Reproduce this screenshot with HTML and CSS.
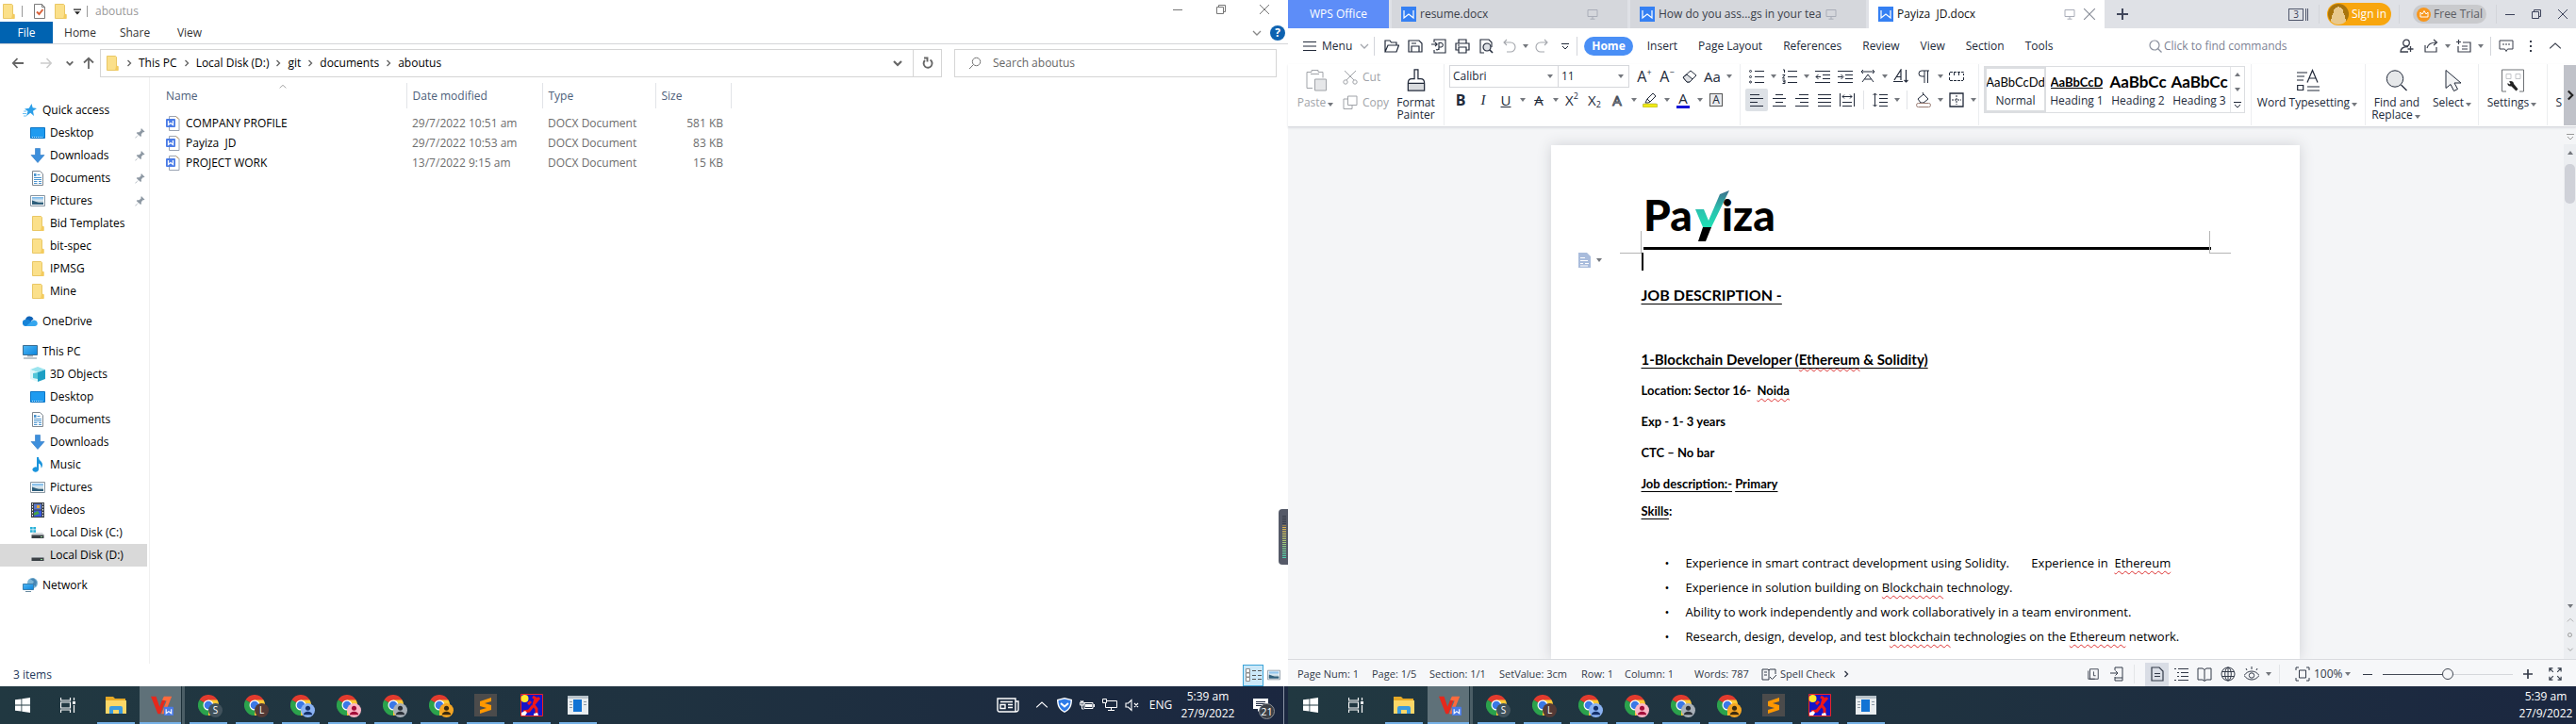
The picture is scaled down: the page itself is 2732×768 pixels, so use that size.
FILE: index.html
```html
<!DOCTYPE html>
<html lang="en">
<head>
<meta charset="utf-8">
<title>aboutus - Payiza JD.docx</title>
<link rel="stylesheet" href="styles.css">
</head>
<body>
<svg class="sprite" aria-hidden="true">
  <defs>
    <linearGradient id="gBlue" x1="0" y1="0" x2="1" y2="1"><stop offset="0" stop-color="#4fb8f5"/><stop offset="1" stop-color="#0a84dd"/></linearGradient>
    <linearGradient id="gCheck" x1="0" y1="1" x2="0" y2="0"><stop offset="0" stop-color="#1fe0b4"/><stop offset=".5" stop-color="#2bbfae"/><stop offset="1" stop-color="#3a6f8c"/></linearGradient>
    <linearGradient id="gPhoto" x1="0" y1="0" x2="0" y2="1"><stop offset="0" stop-color="#6fb4ea"/><stop offset=".5" stop-color="#e6eef2"/><stop offset="1" stop-color="#2f6076"/></linearGradient>
  </defs>
  <symbol id="folder" viewBox="0 0 16 16"><path fill="#fbe08a" stroke="#e9c765" d="M2.5.5h9l1 1v9.500l1.500.5v4H2.500z"/><path fill="#f3cb5e" d="M12 11h2.500v5H11z"/></symbol>
  <symbol id="checkdoc" viewBox="0 0 16 16"><path fill="#fff" stroke="#7b7b7b" d="M2.500.5h8l3 3v12h-11z"/><path fill="none" stroke="#7b7b7b" d="M10.500.5v3h3"/><path fill="none" stroke="#d9623b" stroke-width="2" d="M5 8.500l2.500 2.500 4-5"/></symbol>
  <symbol id="qdrop" viewBox="0 0 8 8"><path d="M0 1.500h8v1.300H0zM1 4.200h6L4 7.500z" fill="#222"/></symbol>
  <symbol id="minus" viewBox="0 0 12 12"><path d="M1 6.500h10" stroke="currentColor"/></symbol>
  <symbol id="restore" viewBox="0 0 12 12"><path d="M1.500 3.500h7v7h-7zM3.500 3.500v-2h7v7h-2" fill="none" stroke="currentColor"/></symbol>
  <symbol id="close" viewBox="0 0 12 12"><path d="M1 1l10 10M11 1L1 11" stroke="currentColor"/></symbol>
  <symbol id="down" viewBox="0 0 12 12"><path d="M2 4l4 4 4-4" fill="none" stroke="currentColor" stroke-width="1.300"/></symbol>
  <symbol id="downb" viewBox="0 0 12 12"><path d="M2 4l4 4 4-4" fill="none" stroke="currentColor" stroke-width="2.200"/></symbol>
  <symbol id="up" viewBox="0 0 12 12"><path d="M1 8l5-4.500L11 8" fill="none" stroke="currentColor"/></symbol>
  <symbol id="right" viewBox="0 0 8 8"><path d="M2.500 1l3 3-3 3" fill="none" stroke="currentColor" stroke-width="1.400"/></symbol>
  <symbol id="arrl" viewBox="0 0 14 14"><path d="M13 7H2M6.500 2L1.800 7l4.700 5" fill="none" stroke="currentColor" stroke-width="1.800"/></symbol>
  <symbol id="arrr" viewBox="0 0 14 14"><path d="M1 7h11M7.500 2l4.700 5-4.700 5" fill="none" stroke="currentColor" stroke-width="1.600"/></symbol>
  <symbol id="arru" viewBox="0 0 14 14"><path d="M7 13V2M2 6.500L7 1.800l5 4.700" fill="none" stroke="currentColor" stroke-width="1.800"/></symbol>
  <symbol id="refresh" viewBox="0 0 14 14"><path d="M9.500 3.500A4.500 4.500 0 1 1 4 4M3 1.500h3.500v4" fill="none" stroke="currentColor" stroke-width="1.900"/></symbol>
  <symbol id="mag" viewBox="0 0 14 14"><circle cx="8.500" cy="5.500" r="4.200" fill="none" stroke="currentColor"/><path d="M5.500 8.500L1 13" stroke="currentColor"/></symbol>
  <symbol id="magr" viewBox="0 0 14 14"><circle cx="6" cy="6" r="5" fill="none" stroke="currentColor" stroke-width="1.200"/><path d="M9.500 9.500L13.500 13.500" stroke="currentColor" stroke-width="1.200"/></symbol>
  <symbol id="star" viewBox="0 0 16 16"><path fill="#2c9fe8" d="M9.500 1l1.200 4.300 4.300.7-4 2.700L12 14 8.300 10.800 4 14l1.500-5L2 6.500l4.800-.8z"/><path stroke="#6cc0f2" d="M1 9h3M0 11.500h4M1 14h3"/></symbol>
  <symbol id="desk" viewBox="0 0 16 16"><path fill="#1e9bf0" stroke="#0b74c4" d="M.5 2.500h15v11H.5z"/><path stroke="#cfe9fb" stroke-dasharray="1 1" d="M2 12.500h12"/></symbol>
  <symbol id="dl" viewBox="0 0 16 16"><path fill="#3d8fdc" stroke="#2a77c4" stroke-width=".6" d="M5.500.5h5v7H15l-7 8-7-8h4.500z"/></symbol>
  <symbol id="doc" viewBox="0 0 16 16"><path fill="#fff" stroke="#7e8790" d="M2.500.5h8l3 3v12h-11z"/><path stroke="#4a94cf" d="M4 7.500h8M4 9.500h8M4 11.500h3.500M9 11.500h3M4 13.500h3.500M9 13.500h3M7.500 4.500h3"/><path fill="#4a94cf" d="M4 3h2.500v3H4z"/></symbol>
  <symbol id="pic" viewBox="0 0 16 16"><path fill="#fff" stroke="#8795a1" d="M.5 2.500h15v11H.5z"/><path fill="url(#gPhoto)" d="M2 4h12v8H2z"/><path fill="#2f5f7c" d="M2 7.500l7 2.500h5v2H2z"/></symbol>
  <symbol id="cloud" viewBox="0 0 16 16"><path fill="#0f63b8" d="M3 6a4.500 4.500 0 0 1 8.500-.8L7 10z"/><path fill="#1684d8" d="M3.500 13A3.500 3.500 0 0 1 3.200 6c2-.5 3.500.3 5 1.600L14 12z"/><path fill="#35a6ee" d="M3.500 13L10 7.500a3.500 3.500 0 0 1 3-.8 3.200 3.200 0 0 1 .2 6.300z"/></symbol>
  <symbol id="pc" viewBox="0 0 16 16"><path fill="url(#gBlue)" stroke="#3e6f92" d="M.5 1.500h15v10H.5z"/><path stroke="#7b8b97" d="M5 12.800h6M1 15h14"/></symbol>
  <symbol id="cube" viewBox="0 0 16 16"><path fill="#9be4ee" d="M8 0l8 3-8 3-8-3z"/><path fill="#dff7fa" d="M0 3l8 3v10l-8-3z"/><path fill="#1d9fc4" d="M16 3L8 6v10l8-3z"/><path fill="#52c6d8" d="M3 7l5-1v7l-5-1z"/></symbol>
  <symbol id="music" viewBox="0 0 16 16"><path fill="#1a94dc" d="M7 0h2c0 4 4 4 4 8 0 1.500-.6 3-1.500 3.500C12 8 10 7 9 6.500V13a3.300 2.700 0 1 1-2-2.400z"/></symbol>
  <symbol id="video" viewBox="0 0 16 16"><path fill="#3a3f46" d="M1 0h14v16H1z"/><path stroke="#fff" stroke-dasharray="1.500 1.500" d="M2.500 1v14M13.500 1v14"/><path fill="#5c79c9" d="M4 1.500h8v6H4z"/><path fill="#3758e0" d="M4 8.500h8V15H4z"/><path fill="#e0a63a" d="M7 3h3v3H7z"/><path fill="#46a04a" d="M4 11l4-2 2 3-6 2z"/></symbol>
  <symbol id="drive" viewBox="0 0 16 16"><path fill="#d7dadd" d="M3 8h10l2 3H1z"/><path fill="#3b4146" d="M1.500 10.500h13V14h-13z"/><path fill="#8fd08f" d="M11 12h2v1h-2z"/></symbol>
  <symbol id="drivec" viewBox="0 0 16 16"><use href="#drive"/><path fill="#27b0d8" d="M0 2h2.700v2.500H0zM3.300 2H6v2.500H3.300zM0 5.200h2.700v2.500H0zM3.300 5.200H6v2.500H3.300z"/></symbol>
  <symbol id="net" viewBox="0 0 16 16"><circle cx="10.500" cy="5.500" r="5.500" fill="#7eb6d6"/><path fill="#4786b4" d="M8 1l4 3-2 3 4 2 1-5-3-3.500z"/><path fill="url(#gBlue)" stroke="#3a7fae" d="M.5 6.500h11v6H.5z"/><path stroke="#6a8ba0" d="M3 14.500h6"/></symbol>
  <symbol id="pin" viewBox="0 0 12 12"><path fill="#8d98a3" d="M7.500 0l4 4-1 .6-.8-.2-2.300 2.300.2 2.300-1 .8L4.300 7.500 1 11.200.5 11.500.4 11l3.700-3.300L1.800 5.400l1-.9 2.300.2 2.200-2.300-.3-.9z"/></symbol>
  <symbol id="docw" viewBox="0 0 16 16"><path fill="#fff" stroke="#9aa3b2" d="M3.500.5h7.500l3 3v12H3.500z"/><path fill="none" stroke="#c9a26b" d="M10.500.5l3 3"/><rect y="3" width="10" height="9" rx="1" fill="#4a7be6"/><path fill="none" stroke="#fff" stroke-width="1.300" d="M2.500 5v4.500L5 7.500l2.500 2V5"/></symbol>
  <symbol id="details" viewBox="0 0 18 16"><path fill="#fff" stroke="#8b8b8b" d="M1.500 1.500h4v4h-4zM1.500 6h4v4h-4zM1.500 10.500h4v4h-4z"/><path stroke="#555" d="M8 3.500h4M14 3.500h4M8 8.500h4M14 8.500h4M8 12.500h4M14 12.500h4"/></symbol>

  <symbol id="wtab" viewBox="0 0 16 16"><path fill="#3580f3" d="M0 0h16v16H0z"/><path fill="none" stroke="#fff" stroke-width="1.200" d="M3 4v8l5-4 5 4V4"/></symbol>
  <symbol id="mon" viewBox="0 0 12 12"><path d="M1 1.500h10v7H1zM6 8.500v2.500M3.500 11.200h5" fill="none" stroke="currentColor"/></symbol>
  <symbol id="plus" viewBox="0 0 12 12"><path d="M6 0v12M0 6h12" stroke="currentColor" stroke-width="2"/></symbol>
  <symbol id="burger" viewBox="0 0 14 12"><path d="M0 1.500h14M0 6h14M0 10.500h14" stroke="currentColor"/></symbol>
  <symbol id="open" viewBox="0 0 16 16"><path d="M1 14V2h5l1.500 2H13v3M1 14l3-7h11.500L13 14z" fill="none" stroke="currentColor" stroke-width="1.200"/></symbol>
  <symbol id="save" viewBox="0 0 16 16"><path d="M1 2h11l3 3v9H1zM4 14V8h8v6M4 5h5" fill="none" stroke="currentColor" stroke-width="1.200"/></symbol>
  <symbol id="pdf" viewBox="0 0 16 16"><path d="M3 4V1h12v14H3v-3M0 6h6M4 3.800L6.200 6 4 8.200M8 12V4.500h2.500a2.300 2.300 0 0 1 0 4.500H8M5 11.500a2 2 0 0 0 3-1" fill="none" stroke="currentColor" stroke-width="1.100"/></symbol>
  <symbol id="print" viewBox="0 0 16 16"><path d="M4 5V1h8v4M4 12H1V5h14v7h-3M4 9h8v6H4zM3 7h2" fill="none" stroke="currentColor" stroke-width="1.200"/></symbol>
  <symbol id="preview" viewBox="0 0 16 16"><path d="M6 15H2V1h9l3 3v5" fill="none" stroke="currentColor" stroke-width="1.100"/><circle cx="9" cy="9" r="4" fill="#dde0e5" stroke="currentColor" stroke-width="1.200"/><path d="M12 12l3 3" stroke="currentColor" stroke-width="1.600"/></symbol>
  <symbol id="undo" viewBox="0 0 16 16"><path d="M5 1L2 4l3 3M2 4h7a4.500 4.500 0 0 1 0 10H5" fill="none" stroke="currentColor" stroke-width="1.100"/></symbol>
  <symbol id="redo" viewBox="0 0 16 16"><path d="M11 1l3 3-3 3M14 4H7a4.500 4.500 0 0 0 0 10h4" fill="none" stroke="currentColor" stroke-width="1.100"/></symbol>
  <symbol id="more" viewBox="0 0 8 8"><path d="M0 1.500h8M1 4l3 3 3-3" fill="none" stroke="currentColor"/></symbol>
  <symbol id="user" viewBox="0 0 16 16"><circle cx="8" cy="4.500" r="3.300" fill="none" stroke="currentColor" stroke-width="1.300"/><path d="M10 8.500c-4 0-8 1-8 5.500h8M12.500 8v6M9.500 11h6" fill="none" stroke="currentColor" stroke-width="1.300"/></symbol>
  <symbol id="share" viewBox="0 0 16 16"><path d="M2 7v7h12V9M4 10c1-4 4-6 10-6M11 1l3.500 3L11 7" fill="none" stroke="currentColor" stroke-width="1.200"/></symbol>
  <symbol id="cmt" viewBox="0 0 16 16"><path d="M7 4h8v10H2V8M0 3.500h5M2.500 1v5M6 8h6M6 11h6" fill="none" stroke="currentColor" stroke-width="1.200"/></symbol>
  <symbol id="chat" viewBox="0 0 16 16"><path d="M1 2h14v9H9.500L8 13.500 6.500 11H1z" fill="none" stroke="currentColor"/><path d="M4 6h2M7 6h2M10 6h2" stroke="currentColor"/></symbol>
  <symbol id="dots" viewBox="0 0 4 14"><path fill="currentColor" d="M1 1h2v2H1zM1 6h2v2H1zM1 11h2v2H1z"/></symbol>

  <symbol id="paste" viewBox="0 0 24 24"><path d="M8 20H2V3h5V1h7v2h5v6M6 5h9" fill="none" stroke="#a0a3a8"/><path fill="#e6e7e9" stroke="#a0a3a8" d="M10.500 10.500h12v12h-12z"/></symbol>
  <symbol id="cut" viewBox="0 0 16 16"><path d="M2 1l10 10M14 1L4 11" stroke="currentColor"/><circle cx="3" cy="13" r="2.200" fill="none" stroke="currentColor"/><circle cx="13" cy="13" r="2.200" fill="none" stroke="currentColor"/></symbol>
  <symbol id="copy" viewBox="0 0 16 16"><path d="M5.500 1h9.500v9.500H5.500zM5 4H1v10.500h9V11" fill="none" stroke="currentColor"/></symbol>
  <symbol id="brush" viewBox="0 0 24 26"><path fill="#d9dbde" d="M3 16h18v8H3z"/><path d="M10 1h4v10h3c3 0 4 2 4 5v8H3v-8c0-3 1-5 4-5h3zM3 16h18" fill="none" stroke="currentColor" stroke-width="1.300"/></symbol>
  <symbol id="eraser" viewBox="0 0 16 16"><path d="M1 9l8-7 6 5-7 7H5z" fill="none" stroke="currentColor"/><path d="M5 6l6 5-3 3H5L1 9z" fill="#dfe1e4" stroke="currentColor"/></symbol>
  <symbol id="pen" viewBox="0 0 16 16"><path d="M5 7l6-6 3 3-6 6zM5 7l-2 4h3l2-1" fill="none" stroke="currentColor"/><rect x="0" y="12" width="16" height="4" rx="2" fill="#efe914" stroke="#8a8a3a" stroke-width=".5"/></symbol>
  <symbol id="bul" viewBox="0 0 16 16"><path d="M6 2.500h10M6 8.500h10M6 14.500h10" stroke="currentColor"/><g fill="none" stroke="currentColor"><circle cx="1.500" cy="2.500" r="1"/><circle cx="1.500" cy="8.500" r="1"/><circle cx="1.500" cy="14" r="1"/></g></symbol>
  <symbol id="num" viewBox="0 0 16 16"><path d="M6 2.500h10M6 8.500h10M6 14.500h10" stroke="currentColor"/><path d="M1 1h1.500v3M.5 6.500h2.500l-2.500 3.500h2.500M.5 12h2.500v3.500H.5M1 13.700h2" fill="none" stroke="currentColor"/></symbol>
  <symbol id="outd" viewBox="0 0 16 16"><path d="M0 2.500h16M8 6.500h8M8 10.500h8M0 14.500h16M6 8.500H1M3.500 6L1 8.500 3.500 11" fill="none" stroke="currentColor"/></symbol>
  <symbol id="ind" viewBox="0 0 16 16"><path d="M0 2.500h16M8 6.500h8M8 10.500h8M0 14.500h16M0 8.500h5M3.500 6L6 8.500 3.500 11" fill="none" stroke="currentColor"/></symbol>
  <symbol id="adist" viewBox="0 0 16 16"><path d="M1 3h14M3 1L1 3l2 2M13 1l2 2-2 2M2 14l6-8 6 8M4.500 11h7" fill="none" stroke="currentColor"/></symbol>
  <symbol id="sort" viewBox="0 0 16 16"><path d="M0 13.500h10M1 12L8 1v11M3.500 8.500H8M13.500 1v13M11.500 12l2 2 2-2" fill="none" stroke="currentColor" stroke-width="1.200"/></symbol>
  <symbol id="para" viewBox="0 0 16 16"><path d="M12.500 2v13M9 2v13M14 2H6a3 3 0 0 0 0 6h3" fill="none" stroke="currentColor"/></symbol>
  <symbol id="tabs" viewBox="0 0 16 16"><path d="M.5 7V3.500h15V7M5.500 4v3M10.500 4v3" fill="none" stroke="currentColor" stroke-dasharray="3 1"/><path d="M1 12.500h14M.5 9v4M15.500 9v4" stroke="currentColor" stroke-dasharray="3 1" fill="none"/></symbol>
  <symbol id="al" viewBox="0 0 16 16"><path d="M1 2.500h10M1 6.500h14M1 10.500h8M1 14.500h14" stroke="currentColor"/></symbol>
  <symbol id="ac" viewBox="0 0 16 16"><path d="M4 2.500h8M1 6.500h14M4 10.500h8M1 14.500h14" stroke="currentColor"/></symbol>
  <symbol id="ar" viewBox="0 0 16 16"><path d="M5 2.500h10M1 6.500h14M6 10.500h9M1 14.500h14" stroke="currentColor"/></symbol>
  <symbol id="aj" viewBox="0 0 16 16"><path d="M1 2.500h14M1 6.500h14M1 10.500h14M1 14.500h14" stroke="currentColor"/></symbol>
  <symbol id="ad" viewBox="0 0 16 16"><path d="M.5 1v14M15.500 1v14M3 10.500h10M3 14.500h10M3 4.500h10M5 2.500l-2 2 2 2M11 2.500l2 2-2 2" fill="none" stroke="currentColor"/></symbol>
  <symbol id="lsp" viewBox="0 0 16 16"><path d="M2.500 1v14M.5 3l2-2 2 2M.5 13l2 2 2-2M7 2.500h9M7 6.500h9M7 10.500h9M7 14.500h9" fill="none" stroke="currentColor"/></symbol>
  <symbol id="shade" viewBox="0 0 16 16"><path d="M2 7l6-5 5 5-5 4H5zM8 2L7 0" fill="none" stroke="currentColor"/><rect x=".5" y="11.500" width="15" height="4" rx="2" fill="#fff" stroke="#9a7b72"/></symbol>
  <symbol id="border" viewBox="0 0 16 16"><path d="M1 1h14v14H1z" fill="none" stroke="currentColor" stroke-width="1.300"/><path d="M8 3v10M3 8h10" stroke="currentColor" stroke-dasharray="2 1"/></symbol>
  <symbol id="typeset" viewBox="0 0 24 24"><path d="M0 3.500h11M0 7.500h8M0 11.500h7M11 18.500h13M11 22.500h13M.7 17h6v5h-6zM11 14l5.500-13L22 14M13 9.500h7" fill="none" stroke="currentColor" stroke-width="1.200"/></symbol>
  <symbol id="find" viewBox="0 0 24 24"><circle cx="10" cy="10" r="8.700" fill="#e6e8ea" stroke="currentColor"/><path d="M16.500 16.500l6 6" stroke="currentColor" stroke-width="1.300"/></symbol>
  <symbol id="select" viewBox="0 0 24 24"><path d="M4 1v19l5-4 3.500 7 4-2-3.500-6.500h7z" fill="#f2f3f4" stroke="currentColor"/></symbol>
  <symbol id="settings" viewBox="0 0 24 24"><path d="M5 23.500H.5V.5h23v23H19" fill="none" stroke="#6f7276"/><path d="M5 5h5v5H5zM15 5h5v5h-5z" fill="none" stroke="#c3c5c9"/><path d="M8 13c2-1.500 5 0 5 2.500l4.500 5.500-2 2-5-5C8 18.500 6 17 6.500 14.500l2 1.500 1-1z" fill="#222"/></symbol>
  <symbol id="layout" viewBox="0 0 16 16"><path fill="#a9bcdc" d="M1 0h9l4 4v12H1z"/><path stroke="#fff" d="M3 5.500h5M3 8.500h8M3 11.500h3M8 11.500h4M3 14h8"/></symbol>
  <symbol id="spell" viewBox="0 0 16 16"><path d="M8 14H1V3h6l1 1 1-1h6v5M8 4v10M9 11l2.500 2.500L16 9M3 6h3M3 9h3" fill="none" stroke="currentColor"/></symbol>
  <symbol id="hist" viewBox="0 0 16 16"><path d="M2 4v10h8M4 2h10v12H4zM8.500 5v5H11" fill="none" stroke="currentColor"/></symbol>
  <symbol id="exp" viewBox="0 0 16 16"><path d="M6 4V1h8v14H6v-4M1 7h8M6.500 4.500L9 7 6.500 9.500M6 12h8" fill="none" stroke="currentColor"/></symbol>
  <symbol id="pgv" viewBox="0 0 16 16"><path d="M2 1h8l4 4v10H2zM5 7.500h6M5 10.500h6" fill="none" stroke="currentColor" stroke-width="1.200"/></symbol>
  <symbol id="outl" viewBox="0 0 16 16"><path d="M1 2.500h2M5 2.500h11M4 6.500h2M8 6.500h8M4 10.500h2M8 10.500h8M1 14.500h2M5 14.500h11" stroke="currentColor"/></symbol>
  <symbol id="book" viewBox="0 0 16 16"><path d="M1 2h5l2 1.500L10 2h5v12h-5l-2 1.500L6 14H1zM8 3.500V15" fill="none" stroke="currentColor"/></symbol>
  <symbol id="globe" viewBox="0 0 16 16"><g fill="none" stroke="currentColor"><circle cx="8" cy="8" r="7"/><ellipse cx="8" cy="8" rx="3.300" ry="7"/><path d="M1.500 5.500h13M1.500 10.500h13M8 1v14"/></g></symbol>
  <symbol id="eye" viewBox="0 0 16 16"><path d="M0 9.500c4-6 12-6 16 0-4 6-12 6-16 0zM3 4L2 2M8 3V0M13 4l1-2" fill="none" stroke="currentColor"/><circle cx="8" cy="9.500" r="2.700" fill="none" stroke="currentColor"/></symbol>
  <symbol id="fit" viewBox="0 0 16 16"><path d="M1 4V1h3M12 1h3v3M15 12v3h-3M4 15H1v-3M4.500 4h7v8h-7z" fill="none" stroke="currentColor"/></symbol>
  <symbol id="full" viewBox="0 0 16 16"><path d="M1 5V1h4M11 1h4v4M15 11v4h-4M5 15H1v-4M1 1l4.500 4.500M15 1l-4.500 4.500M15 15l-4.500-4.500M1 15l4.500-4.500" fill="none" stroke="currentColor" stroke-width="1.300"/></symbol>

  <symbol id="win" viewBox="0 0 16 16"><path fill="#fff" d="M0 2.300l6.500-.9v6.200H0zM7.300 1.300L16 0v7.600H7.300zM0 8.400h6.500v6.200L0 13.700zM7.300 8.400H16V16l-8.700-1.200z"/></symbol>
  <symbol id="tview" viewBox="0 0 16 16"><path d="M.5 0v3h10V0M.5 16v-3h10v3M.5 5h10v6H.5zM14.500 0v3M14.500 8v8" fill="none" stroke="#fff" stroke-width="1.200"/><path fill="#fff" d="M13 4h3v3h-3z"/></symbol>
  <symbol id="fexp" viewBox="0 0 22 20"><path fill="#e5a927" d="M0 1h8l2 2h11v4H0z"/><path fill="#fbd767" d="M0 5h22v14H0z"/><path fill="#3a9be0" d="M4 19v-6q0-2 2-2h10q2 0 2 2v6h-4v-4H8v4z"/></symbol>
  <symbol id="wps" viewBox="0 0 26 24"><path fill="#e5281c" d="M0 2h6l4 12L13 6h4L11 22H8z"/><path fill="#ff6a3c" d="M13 6l2-4h9l-8 20h-4l6-15z"/><rect x="15" y="14" width="11" height="10" rx="1" fill="#4a7be6"/><path fill="none" stroke="#fff" stroke-width="1.200" d="M17.500 16.500v5l3-2.300 3 2.300v-5"/></symbol>
  <symbol id="chrome" viewBox="0 0 24 24"><path fill="#e23b2e" d="M12 12L1.600 6A12 12 0 0 1 22.400 6z"/><path fill="#2ba24c" d="M12 12v12A12 12 0 0 1 1.600 6z"/><path fill="#fcc934" d="M12 12V6h10.400A12 12 0 0 1 12 24z"/><circle cx="12" cy="12" r="6" fill="#fff"/><circle cx="12" cy="12" r="4.700" fill="#3b78e7"/></symbol>
  <symbol id="person" viewBox="0 0 16 16"><circle cx="8" cy="5.500" r="2.700"/><path d="M3 13c0-5 10-5 10 0z"/></symbol>
  <symbol id="subl" viewBox="0 0 24 24"><path fill="#4b4b4b" d="M0 0h24v24H0z"/><path fill="#ff9800" d="M18 4L6 8v5l7 2-7 2v4l12-4v-5l-7-2 7-2z"/></symbol>
  <symbol id="runner" viewBox="0 0 24 24"><path fill="#1515c8" stroke="#e22" d="M.5.500h23v23H.5z"/><circle cx="4.500" cy="5" r="4" fill="#ffe92b"/><path fill="none" stroke="#f01818" stroke-width="3" d="M13 3l3 2-2 7 3 4v5M11 8l-3 3M20 4l-5 6M13 13l-4 5-6 1"/><path fill="#fff" d="M1 20l4-2 2 2-2 3H1zM14 21l4-1 1 3h-5z"/></symbol>
  <symbol id="app" viewBox="0 0 22 20"><path fill="#e9edf0" d="M0 0h22v20H0z"/><path fill="#b8c2ca" d="M0 0h22v3H0z"/><path fill="#1173d4" d="M6 4h9v13H6z"/><path stroke="#8d99a3" d="M2 6.500h3M2 9.500h3M2 12.500h3M17 6.500h3M17 9.500h3"/></symbol>
  <symbol id="news" viewBox="0 0 24 16"><path d="M1 1h19v14H3a2 2 0 0 1-2-2zM20 4h3v9a2 2 0 0 1-3 1.500M4 4.500h13M12 7.500h5M12 10.500h5M4 7.500h5v4H4z" fill="none" stroke="#fff" stroke-width="1.400"/></symbol>
  <symbol id="shield" viewBox="0 0 16 16"><path fill="#fff" d="M8 0l8 2c0 7-2 11-8 14C2 13 0 9 0 2z"/><path fill="#2f7be8" d="M8 1.500L14.500 3c0 5.500-2 9-6.500 11.500C3.500 12 1.500 8.500 1.500 3z"/><path d="M4 6l4 3.500L12 6" fill="none" stroke="#fff" stroke-width="2"/></symbol>
  <symbol id="bat" viewBox="0 0 16 16"><path d="M5 5.500h9v6H5zM2.500 4v8h2M.5 5h4v3h-4zM1.500 3v2M3.500 3v2" fill="none" stroke="#fff"/><path fill="#fff" d="M6 7h7v3H6zM14.500 7H16v3h-1.500z"/></symbol>
  <symbol id="lan" viewBox="0 0 16 16"><path d="M5 3.500h10.500v7H3.500V6M9.500 10.500v3M6 13.500h7M.5 1.500h4v4h-4z" fill="none" stroke="#fff"/></symbol>
  <symbol id="mute" viewBox="0 0 16 16"><path d="M1 6h2.500L7 2.500v11L3.500 10H1zM10 6l4 4M14 6l-4 4" fill="none" stroke="#fff" stroke-width="1.100"/></symbol>
  <symbol id="action" viewBox="0 0 16 16"><path fill="#fff" d="M0 1h16v11H8l-3 3v-3H0z"/><path stroke="#1c2740" d="M3 4.500h10M3 6.500h10M3 8.500h7"/></symbol>
</svg>

<main class="desktop">
  <div class="monitor">
    <section class="explorer" aria-label="aboutus">
      <header class="ex-title">
        <div class="ex-quick">
          <svg class="i16"><use href="#folder"/></svg><i class="bar"></i>
          <svg class="i16 check"><use href="#checkdoc"/></svg><svg class="i16"><use href="#folder"/></svg>
          <svg class="i8"><use href="#qdrop"/></svg><i class="bar"></i><span>aboutus</span>
        </div>
        <div class="ex-win">
          <button aria-label="Minimize"><svg class="i12"><use href="#minus"/></svg></button>
          <button aria-label="Restore"><svg class="i12"><use href="#restore"/></svg></button>
          <button aria-label="Close"><svg class="i12"><use href="#close"/></svg></button>
        </div>
      </header>
      <nav class="ex-tabs">
        <button class="file">File</button><button>Home</button><button>Share</button><button>View</button>
        <div class="ex-help"><svg class="i12"><use href="#down"/></svg><button class="help" aria-label="Help">?</button></div>
      </nav>
      <div class="ex-nav">
        <div class="ex-arrows">
          <button aria-label="Back"><svg class="i14"><use href="#arrl"/></svg></button>
          <button aria-label="Forward" class="off"><svg class="i14"><use href="#arrr"/></svg></button>
          <button aria-label="Recent" class="thin"><svg class="i10"><use href="#downb"/></svg></button>
          <button aria-label="Up" class="thin"><svg class="i14"><use href="#arru"/></svg></button>
        </div>
        <div class="ex-address">
          <svg class="i16"><use href="#folder"/></svg>
          <svg class="i8"><use href="#right"/></svg><a href="#">This PC</a>
          <svg class="i8"><use href="#right"/></svg><a href="#">Local Disk (D:)</a>
          <svg class="i8"><use href="#right"/></svg><a href="#">git</a>
          <svg class="i8"><use href="#right"/></svg><a href="#">documents</a>
          <svg class="i8"><use href="#right"/></svg><a href="#">aboutus</a>
          <button class="hist" aria-label="History"><svg class="i12"><use href="#downb"/></svg></button>
          <button class="refresh" aria-label="Refresh"><svg class="i14"><use href="#refresh"/></svg></button>
        </div>
        <label class="ex-search"><svg class="i14"><use href="#mag"/></svg><input type="text" placeholder="Search aboutus" aria-label="Search aboutus"></label>
      </div>
      <div class="ex-body">
        <nav class="tree">
          <a href="#" class="root"><svg class="i16"><use href="#star"/></svg>Quick access</a>
          <a href="#"><svg class="i16"><use href="#desk"/></svg>Desktop<svg class="pin"><use href="#pin"/></svg></a>
          <a href="#"><svg class="i16"><use href="#dl"/></svg>Downloads<svg class="pin"><use href="#pin"/></svg></a>
          <a href="#"><svg class="i16"><use href="#doc"/></svg>Documents<svg class="pin"><use href="#pin"/></svg></a>
          <a href="#"><svg class="i16"><use href="#pic"/></svg>Pictures<svg class="pin"><use href="#pin"/></svg></a>
          <a href="#"><svg class="i16"><use href="#folder"/></svg>Bid Templates</a>
          <a href="#"><svg class="i16"><use href="#folder"/></svg>bit-spec</a>
          <a href="#"><svg class="i16"><use href="#folder"/></svg>IPMSG</a>
          <a href="#"><svg class="i16"><use href="#folder"/></svg>Mine</a>
          <a href="#" class="root gap"><svg class="i16"><use href="#cloud"/></svg>OneDrive</a>
          <a href="#" class="root gap"><svg class="i16"><use href="#pc"/></svg>This PC</a>
          <a href="#"><svg class="i16"><use href="#cube"/></svg>3D Objects</a>
          <a href="#"><svg class="i16"><use href="#desk"/></svg>Desktop</a>
          <a href="#"><svg class="i16"><use href="#doc"/></svg>Documents</a>
          <a href="#"><svg class="i16"><use href="#dl"/></svg>Downloads</a>
          <a href="#"><svg class="i16"><use href="#music"/></svg>Music</a>
          <a href="#"><svg class="i16"><use href="#pic"/></svg>Pictures</a>
          <a href="#"><svg class="i16"><use href="#video"/></svg>Videos</a>
          <a href="#"><svg class="i16"><use href="#drivec"/></svg>Local Disk (C:)</a>
          <a href="#" class="sel"><svg class="i16"><use href="#drive"/></svg>Local Disk (D:)</a>
          <a href="#" class="root gap"><svg class="i16"><use href="#net"/></svg>Network</a>
        </nav>
        <div class="files">
          <table>
            <thead><tr><th class="c-name"><svg class="sortmark"><use href="#up"/></svg>Name</th><th class="c-date">Date modified</th><th class="c-type">Type</th><th class="c-size">Size</th></tr></thead>
            <tbody>
              <tr><td><span class="fname"><svg class="i16"><use href="#docw"/></svg>COMPANY PROFILE</span></td><td>29/7/2022 10:51 am</td><td>DOCX Document</td><td>581 KB</td></tr>
              <tr><td><span class="fname"><svg class="i16"><use href="#docw"/></svg>Payiza&nbsp; JD</span></td><td>29/7/2022 10:53 am</td><td>DOCX Document</td><td>83 KB</td></tr>
              <tr><td><span class="fname"><svg class="i16"><use href="#docw"/></svg>PROJECT WORK</span></td><td>13/7/2022 9:15 am</td><td>DOCX Document</td><td>15 KB</td></tr>
            </tbody>
          </table>
        </div>
      </div>
      <footer class="ex-status"><span>3 items</span>
        <div class="views"><button class="on" aria-label="Details"><svg class="i18"><use href="#details"/></svg></button><button aria-label="Thumbnails"><svg class="i14"><use href="#pic"/></svg></button></div>
      </footer>
      <div class="meter"><i></i></div>
    </section>
    <footer class="taskbar">
      <button class="sys" aria-label="Start"><svg class="i16"><use href="#win"/></svg></button>
      <button class="sys" aria-label="Task view"><svg class="i16"><use href="#tview"/></svg></button>
      <div class="apps">
        <button class="run" aria-label="File Explorer"><svg class="i22"><use href="#fexp"/></svg></button>
        <button class="run act" aria-label="WPS Office"><svg class="i24"><use href="#wps"/></svg></button>
        <button class="run" aria-label="Chrome S"><svg class="i22"><use href="#chrome"/></svg><b class="badge b1">S</b></button>
        <button class="run" aria-label="Chrome L"><svg class="i22"><use href="#chrome"/></svg><b class="badge b2">L</b></button>
        <button class="run" aria-label="Chrome 3"><svg class="i22"><use href="#chrome"/></svg><svg class="badge b3"><use href="#person"/></svg></button>
        <button class="run" aria-label="Chrome 4"><svg class="i22"><use href="#chrome"/></svg><svg class="badge b4"><use href="#person"/></svg></button>
        <button class="run" aria-label="Chrome 5"><svg class="i22"><use href="#chrome"/></svg><svg class="badge b5"><use href="#person"/></svg></button>
        <button class="run" aria-label="Chrome 6"><svg class="i22"><use href="#chrome"/></svg><svg class="badge b6"><use href="#person"/></svg></button>
        <button class="run" aria-label="Sublime Text"><svg class="i24"><use href="#subl"/></svg></button>
        <button class="run" aria-label="Messenger"><svg class="i24"><use href="#runner"/></svg></button>
        <button class="run" aria-label="Recorder"><svg class="i22"><use href="#app"/></svg></button>
      </div>
      <div class="tray">
        <button class="news" aria-label="News"><svg class="i24"><use href="#news"/></svg></button>
        <button aria-label="Hidden icons"><svg class="i14"><use href="#up"/></svg></button>
        <button aria-label="Security"><svg class="i16"><use href="#shield"/></svg></button>
        <button aria-label="Battery"><svg class="i16"><use href="#bat"/></svg></button>
        <button aria-label="Network"><svg class="i16"><use href="#lan"/></svg></button>
        <button aria-label="Volume"><svg class="i16"><use href="#mute"/></svg></button>
        <button class="lang">ENG</button>
        <time class="clock">5:39 am<br>27/9/2022</time>
        <button class="action" aria-label="Notifications"><svg class="i16"><use href="#action"/></svg><b>21</b></button>
      </div>
    </footer>
  </div>

  <div class="monitor">
    <section class="wps" aria-label="WPS Office">
      <header class="w-tabs">
        <button class="w-home">WPS Office</button>
        <div class="w-tab"><svg class="i16"><use href="#wtab"/></svg><span>resume.docx</span><svg class="i12 mon"><use href="#mon"/></svg></div>
        <div class="w-tab"><svg class="i16"><use href="#wtab"/></svg><span>How do you ass...gs in your tea</span><svg class="i12 mon"><use href="#mon"/></svg></div>
        <div class="w-tab on"><svg class="i16"><use href="#wtab"/></svg><span>Payiza&nbsp; JD.docx</span><svg class="i12 mon"><use href="#mon"/></svg><button aria-label="Close tab"><svg class="i14"><use href="#close"/></svg></button></div>
        <button class="w-new" aria-label="New tab"><svg class="i12"><use href="#plus"/></svg></button>
        <div class="w-right">
          <span class="winnum">3</span><i class="vsep"></i>
          <button class="signin"><i class="avatar"></i>Sign in</button><i class="vsep"></i>
          <button class="trial"><i class="crown"><svg class="i10" viewBox="0 0 10 10"><path d="M1 3l2 2 2-3.500L7 5l2-2v5H1z" fill="none" stroke="#fff"/></svg></i>Free Trial</button><i class="vsep"></i>
          <button aria-label="Minimize"><svg class="i12"><use href="#minus"/></svg></button>
          <button aria-label="Restore"><svg class="i12"><use href="#restore"/></svg></button>
          <button aria-label="Close"><svg class="i12"><use href="#close"/></svg></button>
        </div>
      </header>
      <nav class="w-menu">
        <button class="menu"><svg class="i14"><use href="#burger"/></svg>Menu<svg class="i12 grey"><use href="#down"/></svg></button><i class="vsep"></i>
        <div class="qat">
          <button aria-label="Open"><svg class="i16"><use href="#open"/></svg></button><button aria-label="Save"><svg class="i16"><use href="#save"/></svg></button><button aria-label="Export to PDF"><svg class="i16"><use href="#pdf"/></svg></button><button aria-label="Print"><svg class="i16"><use href="#print"/></svg></button><button aria-label="Print preview"><svg class="i16"><use href="#preview"/></svg></button><button class="grey" aria-label="Undo"><svg class="i16"><use href="#undo"/></svg></button><i class="caret"></i><button class="grey" aria-label="Redo"><svg class="i16"><use href="#redo"/></svg></button><button aria-label="Customize"><svg class="i8"><use href="#more"/></svg></button>
        </div><i class="vsep"></i>
        <div class="w-cats"><button class="on">Home</button><button>Insert</button><button>Page Layout</button><button>References</button><button>Review</button><button>View</button><button>Section</button><button>Tools</button></div>
        <label class="w-search"><svg class="i14"><use href="#magr"/></svg><input type="text" placeholder="Click to find commands" aria-label="Click to find commands"></label>
        <div class="w-tools">
          <button aria-label="Share with"><svg class="i16"><use href="#user"/></svg></button><button aria-label="Share"><svg class="i16"><use href="#share"/></svg></button><i class="caret"></i><button aria-label="Comment"><svg class="i16"><use href="#cmt"/></svg></button><i class="caret"></i><i class="vsep"></i><button aria-label="Feedback"><svg class="i16"><use href="#chat"/></svg></button><button aria-label="More"><svg class="i14"><use href="#dots"/></svg></button><button aria-label="Collapse"><svg class="i14"><use href="#up"/></svg></button>
        </div>
      </nav>
      <div class="ribbon">
        <button class="big paste"><svg class="i24"><use href="#paste"/></svg><span>Paste<i class="caret"></i></span></button>
        <div class="pair"><button><svg class="i16"><use href="#cut"/></svg>Cut</button><button><svg class="i16"><use href="#copy"/></svg>Copy</button></div>
        <button class="big painter"><svg class="i24"><use href="#brush"/></svg><span>Format<br>Painter</span></button>
        <i class="rsep"></i>
        <div class="rows">
          <div class="row">
            <span class="combo font"><select aria-label="Font"><option>Calibri</option></select><i class="caret"></i></span><span class="combo size"><select aria-label="Font size"><option>11</option></select><i class="caret"></i></span>
            <button class="t big-a">A<sup>+</sup></button><button class="t big-a">A<sup>−</sup></button><button aria-label="Clear formatting"><svg class="i16"><use href="#eraser"/></svg></button><button class="t">Aa</button><i class="caret"></i>
          </div>
          <div class="row">
            <button class="t bold">B</button><button class="t ital">I</button><button class="t und">U</button><i class="caret"></i><button class="t strike">A</button><i class="caret"></i><button class="t">X<sup>2</sup></button><button class="t">X<sub>2</sub></button><button class="t outline">A</button><i class="caret"></i><button aria-label="Highlight"><svg class="i16"><use href="#pen"/></svg></button><i class="caret"></i><button class="t"><span class="fcolor">A</span></button><i class="caret"></i><button class="t"><span class="boxed">A</span></button>
          </div>
        </div>
        <i class="rsep"></i>
        <div class="rows parag">
          <div class="row">
            <button aria-label="Bullets"><svg class="i16"><use href="#bul"/></svg></button><i class="caret"></i><button aria-label="Numbering"><svg class="i16"><use href="#num"/></svg></button><i class="caret"></i><button aria-label="Decrease indent"><svg class="i16"><use href="#outd"/></svg></button><button aria-label="Increase indent"><svg class="i16"><use href="#ind"/></svg></button><button aria-label="Character scaling"><svg class="i16"><use href="#adist"/></svg></button><i class="caret"></i><button aria-label="Sort"><svg class="i16"><use href="#sort"/></svg></button><button aria-label="Marks"><svg class="i16"><use href="#para"/></svg></button><i class="caret"></i><button aria-label="Tabs"><svg class="i16"><use href="#tabs"/></svg></button>
          </div>
          <div class="row">
            <button class="on" aria-label="Align left"><svg class="i16"><use href="#al"/></svg></button><button aria-label="Center"><svg class="i16"><use href="#ac"/></svg></button><button aria-label="Align right"><svg class="i16"><use href="#ar"/></svg></button><button aria-label="Justify"><svg class="i16"><use href="#aj"/></svg></button><button aria-label="Distribute"><svg class="i16"><use href="#ad"/></svg></button><i class="msep"></i><button aria-label="Line spacing"><svg class="i16"><use href="#lsp"/></svg></button><i class="caret"></i><i class="msep"></i><button aria-label="Shading"><svg class="i16"><use href="#shade"/></svg></button><i class="caret"></i><button aria-label="Borders"><svg class="i16"><use href="#border"/></svg></button><i class="caret"></i>
          </div>
        </div>
        <i class="rsep"></i>
        <div class="gallery">
          <button class="on"><span class="s0">AaBbCcDd</span><small>Normal</small></button>
          <button><span class="s1">AaBbCcD</span><small>Heading 1</small></button>
          <button><span class="s2">AaBbCc</span><small>Heading 2</small></button>
          <button><span class="s2">AaBbCc</span><small>Heading 3</small></button>
          <div class="gal-nav"><button aria-label="Previous styles"><i class="caret flip"></i></button><button aria-label="Next styles"><i class="caret"></i></button><button aria-label="All styles"><svg class="i8"><use href="#more"/></svg></button></div>
        </div>
        <i class="rsep"></i>
        <button class="big typeset"><svg class="i24"><use href="#typeset"/></svg><span>Word Typesetting<i class="caret"></i></span></button>
        <i class="rsep"></i>
        <button class="big findr"><svg class="i24"><use href="#find"/></svg><span>Find and<br>Replace<i class="caret"></i></span></button>
        <button class="big selectb"><svg class="i24"><use href="#select"/></svg><span>Select<i class="caret"></i></span></button>
        <i class="rsep"></i>
        <button class="big settings"><svg class="i24"><use href="#settings"/></svg><span>Settings<i class="caret"></i></span></button>
        <i class="rsep"></i>
        <button class="big cutoff"><span>S</span></button>
        <button class="scroll-r" aria-label="Scroll ribbon"><svg class="i12"><use href="#right"/></svg></button>
      </div>
      <div class="w-doc">
        <div class="canvas">
          <article class="page">
            <div class="lhead">
              <svg class="logo" viewBox="0 0 150 54" role="img" aria-label="Payiza"><text x="0" y="43">Pa</text><text x="83" y="43">iza</text><path fill="url(#gCheck)" d="M55 20h9l5 12L81 4l10-4-19 39h-9z"/><path d="M63 39h9l-6 15h-8z"/></svg>
              <i class="corner cl"></i><i class="corner cr"></i>
            </div>
            <i class="cursor"></i>
            <span class="pgmark"><svg class="i16"><use href="#layout"/></svg><i class="caret"></i></span>
            <h1>JOB DESCRIPTION -</h1>
            <h2>1-Blockchain Developer (<span class="sp">Ethereum</span> &amp; Solidity)</h2>
            <p>Location: Sector 16-&nbsp; <span class="sp">Noida</span></p>
            <p>Exp - 1- 3 years</p>
            <p>CTC – No bar</p>
            <p><u>Job description:-</u> <u>Primary</u></p>
            <p class="skills"><u>Skills</u>:</p>
            <ul>
              <li>Experience in smart contract development using Solidity. <span class="tabbed">Experience in&nbsp; <span class="sp">Ethereum</span></span></li>
              <li>Experience in solution building on <span class="sp">Blockchain</span> technology.</li>
              <li>Ability to work independently and work collaboratively in a team environment.</li>
              <li>Research, design, develop, and test <span class="sp">blockchain</span> technologies on the <span class="sp">Ethereum</span> network.</li>
            </ul>
          </article>
        </div>
        <div class="vscroll"><svg class="i8"><use href="#more"/></svg><div class="track"><i class="caret flip"></i><i class="thumb"></i><div class="ends"><i class="caret"></i><svg class="i8"><use href="#up"/></svg><i class="dot"></i><svg class="i8"><use href="#down"/></svg></div></div></div>
      </div>
      <footer class="w-status">
        <span class="s-a">Page Num: 1</span><span class="s-b">Page: 1/5</span><span class="s-c">Section: 1/1</span><span class="s-d">SetValue: 3cm</span><span class="s-e">Row: 1</span><span class="s-c">Column: 1</span><span class="s-f">Words: 787</span><button class="spellb"><svg class="i16"><use href="#spell"/></svg>Spell Check<svg class="i8"><use href="#right"/></svg></button>
        <div class="st-right">
          <button aria-label="History"><svg class="i14"><use href="#hist"/></svg></button><button aria-label="Send"><svg class="i16"><use href="#exp"/></svg></button><i class="vsep"></i>
          <button class="on" aria-label="Page view"><svg class="i16"><use href="#pgv"/></svg></button><button aria-label="Outline"><svg class="i16"><use href="#outl"/></svg></button><button aria-label="Reading"><svg class="i16"><use href="#book"/></svg></button><button aria-label="Web"><svg class="i16"><use href="#globe"/></svg></button><button aria-label="Eye care"><svg class="i16"><use href="#eye"/></svg></button><i class="caret"></i><i class="vsep"></i>
          <button class="fit" aria-label="Fit"><svg class="i16"><use href="#fit"/></svg></button><span class="zoom">100%</span><i class="caret"></i>
          <button class="zb" aria-label="Zoom out"><svg class="i12"><use href="#minus"/></svg></button><input type="range" min="0" max="200" value="100" aria-label="Zoom"><button class="zb" aria-label="Zoom in"><svg class="i10"><use href="#plus"/></svg></button>
          <button aria-label="Full screen"><svg class="i14"><use href="#full"/></svg></button>
        </div>
      </footer>
    </section>
    <footer class="taskbar">
      <button class="sys" aria-label="Start"><svg class="i16"><use href="#win"/></svg></button>
      <button class="sys" aria-label="Task view"><svg class="i16"><use href="#tview"/></svg></button>
      <div class="apps">
        <button class="run" aria-label="File Explorer"><svg class="i22"><use href="#fexp"/></svg></button>
        <button class="run act" aria-label="WPS Office"><svg class="i24"><use href="#wps"/></svg></button>
        <button class="run" aria-label="Chrome S"><svg class="i22"><use href="#chrome"/></svg><b class="badge b1">S</b></button>
        <button class="run" aria-label="Chrome L"><svg class="i22"><use href="#chrome"/></svg><b class="badge b2">L</b></button>
        <button class="run" aria-label="Chrome 3"><svg class="i22"><use href="#chrome"/></svg><svg class="badge b3"><use href="#person"/></svg></button>
        <button class="run" aria-label="Chrome 4"><svg class="i22"><use href="#chrome"/></svg><svg class="badge b4"><use href="#person"/></svg></button>
        <button class="run" aria-label="Chrome 5"><svg class="i22"><use href="#chrome"/></svg><svg class="badge b5"><use href="#person"/></svg></button>
        <button class="run" aria-label="Chrome 6"><svg class="i22"><use href="#chrome"/></svg><svg class="badge b6"><use href="#person"/></svg></button>
        <button class="run" aria-label="Sublime Text"><svg class="i24"><use href="#subl"/></svg></button>
        <button class="run" aria-label="Messenger"><svg class="i24"><use href="#runner"/></svg></button>
        <button class="run" aria-label="Recorder"><svg class="i22"><use href="#app"/></svg></button>
      </div>
      <div class="tray second"><time class="clock">5:39 am<br>27/9/2022</time></div>
    </footer>
  </div>
</main>
</body>
</html>
```
FILE: styles.css
```css
* { box-sizing: border-box; }
html, body { height: 100%; }
body { margin: 0; font: 12px/16px "Open Sans", "Noto Sans", sans-serif; color: #111; background: #fff; overflow: hidden; }
button { border: 0; margin: 0; padding: 0; background: none; font: inherit; color: inherit; display: flex; align-items: center; justify-content: center; flex: none; }
a { color: inherit; text-decoration: none; }
input, select { font: inherit; color: inherit; border: 0; background: none; padding: 0; margin: 0; outline: 0; min-width: 0; }
svg { flex: none; display: block; }
i { font-style: normal; flex: none; }
.sprite { position: absolute; width: 0; height: 0; }
.i8 { width: 8px; height: 8px; }
.i10 { width: 10px; height: 10px; }
.i12 { width: 12px; height: 12px; }
.i14 { width: 14px; height: 14px; }
.i16 { width: 16px; height: 16px; }
.i18 { width: 18px; height: 16px; }
.i22 { width: 22px; height: 22px; }
.i24 { width: 24px; height: 24px; }
.caret { width: 11px; display: inline-flex; justify-content: center; align-items: center; }
.caret::before { content: ""; border: 3px solid transparent; border-top: 4px solid #74777d; border-bottom: 0; }
.caret.flip::before { border-top: 0; border-bottom: 4px solid #74777d; }

.desktop { display: flex; height: 100vh; }
.monitor { flex: 1 1 0; min-width: 0; display: flex; flex-direction: column; }
.explorer, .wps { flex: 1; min-height: 0; display: flex; flex-direction: column; position: relative; }

/* File Explorer */
.ex-title { display: flex; height: 23px; justify-content: space-between; color: #999; }
.ex-quick { display: flex; align-items: center; gap: 6px; padding-left: 1px; }
.ex-quick .bar { width: 1px; height: 12px; background: #999; }
.ex-quick .check { margin-left: 4px; }
.ex-quick span { margin-left: 2px; }
.ex-win { display: flex; padding-right: 2px; color: #777; }
.ex-win button { width: 46px; height: 20px; }
.ex-tabs { display: flex; height: 24px; border-bottom: 1px solid #d5d6d8; color: #333; }
.ex-tabs > button { width: 58px; height: 23px; }
.ex-tabs .file { width: 56px; background: #0063b1; color: #fff; }
.ex-help { margin-left: auto; display: flex; align-items: center; gap: 8px; padding-right: 3px; color: #888; }
.help { width: 16px; height: 16px; border-radius: 8px; background: #0d62b0; color: #fff; font-weight: 700; }
.ex-nav { display: flex; padding: 5px 12px 0 0; height: 35px; }
.ex-arrows { width: 106px; display: flex; align-items: center; padding-left: 4px; color: #666; }
.ex-arrows button { width: 30px; height: 30px; }
.ex-arrows .thin { width: 20px; }
.ex-arrows .off { color: #ccc; }
.ex-address { flex: 1 1 893px; display: flex; align-items: center; gap: 6px; border: 1px solid #d5d5d5; padding-left: 4px; color: #000; }
.ex-address .i8 { color: #666; }
.ex-address .hist { margin-left: auto; width: 20px; color: #666; }
.ex-address .refresh { width: 30px; height: 100%; border-left: 1px solid #d5d5d5; color: #666; }
.ex-search { flex: 0 1 342px; margin-left: 13px; border: 1px solid #d5d5d5; display: flex; align-items: center; gap: 12px; padding-left: 14px; color: #777; }
.ex-search input { flex: 1; }
.ex-search input::placeholder { color: #666; opacity: 1; }
.ex-body { flex: 1; display: flex; min-height: 0; }
.tree { width: 159px; padding: 23px 2px 0 0; border-right: 1px solid #f0f0f0; color: #000; }
.tree a { display: flex; align-items: center; height: 24px; padding: 0 2px 0 32px; gap: 5px; white-space: nowrap; }
.tree .root { padding-left: 24px; }
.tree .gap { margin-top: 8px; }
.tree .sel { background: #d9d9d9; }
.tree .pin { width: 11px; height: 11px; margin-left: auto; }
.files { flex: 1; padding: 6px 0 0 17px; }
.files table { border-collapse: collapse; table-layout: fixed; }
.files th { height: 27px; font-weight: 400; text-align: left; color: #4c607a; border-right: 1px solid #e2e4e8; padding: 0 0 0 6px; position: relative; }
.files th.c-name { width: 255px; padding-left: 0; }
.c-date { width: 144px; }
.c-type { width: 120px; }
.c-size { width: 80px; }
.sortmark { position: absolute; left: 119px; top: 0; width: 10px; height: 8px; color: #777; }
.files td { height: 21px; padding: 0 8px 0 6px; color: #6d6d6d; white-space: nowrap; }
.files td:first-child { padding-left: 0; color: #000; }
.files td:last-child { text-align: right; }
.files tbody::before { content: ""; display: block; height: 5px; }
.fname { display: flex; align-items: center; gap: 5px; }
.ex-status { display: flex; justify-content: space-between; align-items: center; height: 24px; padding: 0 4px 0 14px; color: #1e395b; }
.views { display: flex; }
.views button { width: 22px; height: 23px; }
.views .on { background: #cce8f8; border: 1px solid #3ba4d8; }
.meter { position: absolute; right: 0; top: 540px; width: 10px; height: 59px; border-radius: 4px 0 0 4px; background: #555a68; padding: 7px 2px 7px 4px; }
.meter i { display: block; height: 45px; background: repeating-linear-gradient(transparent 0 1px, #555a68 1px 2px), linear-gradient(#3a3f4c 0 20%, #e2b24f 26%, #b9c86c 55%, #45d3b0); }

/* Taskbar */
.taskbar { flex: none; height: 40px; display: flex; background: linear-gradient(90deg, #213841, #1f3240 50%, #1b2740); color: #fff; }
.sys { width: 48px; }
.apps { display: flex; gap: 1px; margin-left: 3px; }
.run { position: relative; width: 48px; }
.run::after { content: ""; position: absolute; left: 4px; right: 4px; bottom: 0; height: 2px; background: #76b1e6; }
.run.act { background: linear-gradient(90deg, #5f7179 44px, #1b2f38 44px 45px, #4b5e66 45px); }
.run.act::after { left: 0; right: 4px; }
.badge { position: absolute; left: 24px; top: 18px; width: 15px; height: 15px; border-radius: 8px; font: 10px/15px "Open Sans", sans-serif; text-align: center; }
.b1 { background: #41525c; }
.b2 { background: #543a36; }
.b3 { background: #8ab2f2; fill: #14306b; }
.b4 { background: #fbb6c6; fill: #a30d39; }
.b5 { background: #a8b0b8; fill: #2b3038; }
.b6 { background: #f5a623; fill: #3a2a10; }
.tray { margin-left: auto; display: flex; align-items: center; padding-right: 4px; }
.tray button { width: 24px; height: 40px; }
.tray .news { margin-right: 12px; }
.tray .lang { width: 36px; }
.clock { width: 64px; text-align: center; line-height: 18px; }
.tray .action { width: 49px; position: relative; border-right: 1px solid #8a93a3; }
.action b { position: absolute; left: 22px; top: 18px; width: 17px; height: 17px; border-radius: 9px; background: #3b3f46; border: 1px solid #8a8e94; font: 11px/15px "Open Sans", sans-serif; }
.tray.second { padding-right: 0; }

/* WPS Writer */
.wps { color: #222a3a; }
.w-tabs { display: flex; height: 30px; background: #dfe1e6; gap: 3px; }
.w-home { width: 107px; background: #5d8df8; color: #fff; }
.w-tab { flex: 0 1 250px; background: #d5d7dc; display: flex; align-items: center; gap: 4px; padding: 0 31px 0 10px; color: #3b3f4a; white-space: nowrap; min-width: 0; }
.w-tab .mon { margin-left: auto; color: #a9adb8; }
.w-tab.on { background: #fff; color: #111; padding-right: 9px; }
.w-tab.on button { margin-left: 4px; color: #888d98; }
.w-new { width: 32px; color: #40465a; }
.w-right { margin-left: auto; display: flex; align-items: center; color: #3c425a; }
.winnum { width: 16px; height: 13px; border: 1px solid #50566b; font-size: 10px; line-height: 11px; text-align: center; margin-right: 16px; box-shadow: 2px 0 0 #dfe1e6, 3px 0 0 #50566b, 4px 0 0 #dfe1e6, 5px 0 0 #50566b; }
.vsep { width: 1px; height: 20px; background: #d3d5da; }
.signin { margin: 0 8px; width: 68px; height: 24px; border-radius: 12px; background: #f8a60e; color: #fff; padding: 0 6px 0 1px; justify-content: flex-start; gap: 3px; white-space: nowrap; }
.avatar { width: 22px; height: 22px; border-radius: 11px; background: radial-gradient(circle at 50% 38%, #e8c88c 5px, transparent 5px), radial-gradient(ellipse at 50% 95%, #e8c88c 8px, transparent 8px), #a8740e; }
.trial { margin: 0 10px 0 14px; width: 78px; height: 20px; border-radius: 10px; background: #c9cacd; color: #5b5d63; gap: 3px; white-space: nowrap; }
.crown { width: 15px; height: 15px; border-radius: 8px; background: #f7971e; display: flex; align-items: center; justify-content: center; }
.w-right > button:nth-last-child(-n+3) { width: 28px; height: 30px; }
.w-menu { display: flex; align-items: center; height: 38px; }
.menu { margin-left: 16px; gap: 6px; margin-right: 4px; }
.menu .grey { margin-left: 1px; }
.grey { color: #a4a7ad; }
.qat { display: flex; padding-left: 5px; }
.qat button { width: 25px; height: 24px; }
.qat .grey + .caret { width: 9px; }
.w-cats { display: flex; padding-left: 7px; }
.w-cats button { padding: 0 11px; height: 20px; white-space: nowrap; }
.w-cats .on { background: #4a8ff6; color: #fff; border-radius: 10px; font-weight: 700; padding: 0 8px; margin-right: 4px; }
.w-search { margin-left: auto; display: flex; align-items: center; gap: 2px; width: 230px; color: #8a8f9d; }
.w-search input { flex: 1; }
.w-search input::placeholder { color: #7d8294; opacity: 1; }
.w-tools { display: flex; align-items: center; margin-left: 30px; padding-right: 9px; color: #3a3f4c; }
.w-tools button { width: 26px; height: 24px; }
.w-tools .caret { width: 9px; }
.w-tools .vsep { margin: 0 3px 0 6px; }
.ribbon { display: flex; height: 67px; border-bottom: 1px solid #d9dbdf; overflow: hidden; box-shadow: 0 1px 2px #dddfe3; z-index: 1; flex: none; }
.rsep { width: 1px; height: 65px; background: #eceef0; }
.big { flex-direction: column; justify-content: flex-start; gap: 4px; padding-top: 5px; line-height: 13px; white-space: nowrap; text-align: center; }
.big > svg { height: 25px; }
.big .caret { width: 10px; height: 10px; }
.paste { width: 58px; color: #a0a3a8; padding-left: 2px; }
.pair { display: flex; flex-direction: column; width: 48px; color: #a0a3a8; }
.pair button { height: 27px; justify-content: flex-start; gap: 5px; }
.painter { width: 59px; }
.rows { padding: 1px 4px 0 5px; display: flex; flex-direction: column; gap: 1px; margin-right: 2px; }
.rows.parag { padding-right: 0; margin-right: 0; }
.row { display: flex; height: 24px; align-items: stretch; }
.row button { width: 24px; }
.row .on { background: #dde1e6; border-radius: 2px; }
.combo { display: flex; align-items: center; border: 1px solid #d5d7db; padding: 0 3px; }
.combo select { flex: 1; appearance: none; }
.combo.font { width: 116px; }
.combo.size { width: 75px; border-left: 0; margin-right: 4px; }
.row .t { font-size: 15px; }
.row .big-a { font-size: 16px; }
.t sup, .t sub { font-size: 9px; line-height: 9px; }
.t sup { align-self: flex-start; margin-top: 3px; }
.t sub { align-self: flex-end; margin-bottom: 3px; }
.row .bold { font-weight: 700; font-size: 16px; }
.ital { font-family: "Liberation Serif", serif; font-style: italic; }
.und { text-decoration: underline; }
.strike { text-decoration: line-through; }
.row .outline { color: #fff; -webkit-text-stroke: 1px #4a4f5a; }
.fcolor { border-bottom: 3px solid #1414d8; line-height: 15px; padding: 0 2px; }
.boxed { border: 1px solid #555; width: 14px; height: 14px; font-size: 12px; line-height: 12px; background: #e8eaed; }
.msep { width: 1px; background: #e2e4e7; margin: 2px 5px; }
.gallery { display: flex; align-self: flex-start; height: 50px; margin: 2px 6px 0 5px; border: 1px solid #dcdee1; }
.gallery > button { flex-direction: column; width: 65px; padding: 0 1px; overflow: hidden; align-items: center; white-space: nowrap; color: #000; }
.gallery > button.on { border: 2px solid #dcdee1; padding: 0; }
.gallery span { height: 24px; line-height: 24px; max-width: 63px; overflow: hidden; font-family: Lato, sans-serif; }
.gallery small { font-size: 12px; line-height: 16px; color: #222a3a; }
.s0 { font-size: 13px; }
.s1 { font-size: 13px; font-weight: 700; text-decoration: underline; }
.s2 { font-size: 17px; font-weight: 700; }
.gal-nav { width: 15px; border-left: 1px solid #e4e6e9; display: flex; flex-direction: column; }
.gal-nav button { flex: 1; }
.typeset { width: 120px; }
.findr { width: 66px; }
.selectb { width: 53px; }
.settings { width: 72px; }
.cutoff { flex: 1; padding-top: 34px; align-items: flex-end; padding-right: 2px; }
.scroll-r { width: 13px; height: 64px; margin-top: 1px; background: #c0c2c9; color: #222; }
.w-doc { flex: 1; min-height: 0; display: flex; background: #f4f5f7; }
.canvas { flex: 1; display: flex; justify-content: center; overflow: hidden; padding: 19px 2px 0 0; }
.page { position: relative; width: 794px; background: #fff; box-shadow: 0 0 14px #cfd1d5; padding: 48px 96px 0; font: 13px/22px Lato, sans-serif; color: #000; }
.lhead { position: relative; height: 63px; padding-left: 2px; margin-bottom: 3px; }
.lhead::after { content: ""; display: block; height: 3px; width: 602px; background: #000; margin-top: 6px; }
.logo { width: 150px; height: 54px; }
.logo text { font: 900 46px Lato, sans-serif; }
.corner { position: absolute; top: 43px; width: 23px; height: 24px; border-bottom: 1px solid #b5b5b5; }
.cl { left: -23px; border-right: 1px solid #b5b5b5; }
.cr { right: -23px; border-left: 1px solid #b5b5b5; }
.cursor { display: block; width: 2px; height: 19px; background: #000; }
.pgmark { position: absolute; left: 28px; top: 114px; display: flex; gap: 2px; }
.page h1, .page h2 { text-decoration: underline; text-underline-offset: 3px; font-weight: 700; }
.page h1 { font-size: 16px; line-height: 24px; margin: 14px 0 45px; }
.page h2 { font-size: 15px; line-height: 22px; margin: 0 0 11px; }
.page p { margin: 0 0 11px; font-weight: 700; }
.page u { text-underline-offset: 3px; }
.page .skills { margin: -4px 0 31px; }
.sp { text-decoration: underline wavy #d33; text-decoration-thickness: 1px; text-underline-offset: 3px; }
.page ul { list-style: none; margin: 0; padding: 0 0 0 25px; font: 13px/26px "Open Sans", sans-serif; white-space: nowrap; }
.page li { display: flex; white-space: pre; }
.page li::before { content: "•"; width: 22px; }
.tabbed { margin-left: 20px; }
.vscroll { width: 13px; display: flex; flex-direction: column; align-items: center; padding-top: 6px; color: #999; }
.track { flex: 1; width: 13px; margin-top: 4px; background: #eceef1; display: flex; flex-direction: column; align-items: center; padding-top: 7px; }
.thumb { width: 11px; height: 42px; margin-top: 10px; border-radius: 5px; background: #cfd1d8; }
.ends { margin-top: auto; display: flex; flex-direction: column; align-items: center; gap: 9px; padding-bottom: 6px; }
.dot { width: 5px; height: 5px; border: 1px solid #999; border-radius: 3px; }
.w-status { display: flex; align-items: center; height: 29px; background: #f6f7f9; border-top: 1px solid #d9dbdf; padding: 2px 0 0 10px; color: #333a48; font-size: 11px; white-space: nowrap; }
.s-a { width: 79px; }
.s-b { width: 61px; }
.s-c { width: 74px; }
.s-d { width: 87px; }
.s-e { width: 46px; }
.s-f { width: 71px; }
.spellb { gap: 4px; }
.spellb .i8 { margin-left: 4px; }
.st-right { margin-left: auto; display: flex; align-items: center; padding-right: 10px; }
.st-right button { width: 25px; height: 25px; }
.st-right .on { background: #d9dde5; }
.st-right .vsep { margin: 0 11px 0 6px; background: #e3e5e8; }
.st-right input { appearance: none; width: 138px; height: 16px; background: linear-gradient(90deg, #444a55 50%, #d5d7db 50%) center / 100% 1px no-repeat; }
.st-right input::-webkit-slider-thumb { appearance: none; width: 12px; height: 12px; border-radius: 6px; border: 1px solid #444a55; background: #f6f7f9; }
.zoom { width: 30px; text-align: center; font-size: 12px; }
.st-right .zb { width: 32px; }
```
